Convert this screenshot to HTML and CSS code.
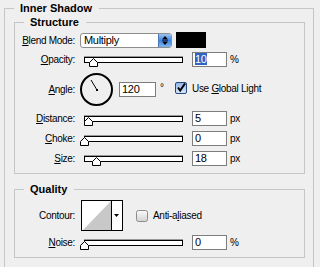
FILE: index.html
```html
<!DOCTYPE html>
<html lang="en">
<head>
  <meta charset="UTF-8" />
  <title>Inner Shadow</title>
  <link rel="stylesheet" href="styles.css">
</head>
<body>
  <fieldset class="panel">
    <legend>Inner Shadow</legend>

    <!-- Structure -->
    <fieldset class="group structure">
      <legend>Structure</legend>

      <div class="row row-blend">
        <label class="lbl"><u>B</u>lend Mode:</label>
        <div class="select">
          <span class="select-text">Multiply</span>
          <span class="stepper">
            <svg width="12" height="15" viewBox="0 0 12 15">
              <polygon points="6,3 9,6.5 3,6.5" fill="#000"/>
              <line x1="3" y1="7.5" x2="9" y2="7.5" stroke="#1c3f7a" stroke-width="1"/>
              <polygon points="3,8.5 9,8.5 6,12" fill="#000"/>
            </svg>
          </span>
        </div>
        <span class="swatch"></span>
      </div>

      <div class="row">
        <label class="lbl"><u>O</u>pacity:</label>
        <div class="slider">
          <div class="track"></div>
          <svg class="thumb" style="left:9px" width="9" height="9" viewBox="0 0 9 9"><polygon points="0.5,4.5 4.5,0.5 8.5,4.5 8.5,8.5 0.5,8.5" fill="#fff" stroke="#000"/></svg>
        </div>
        <div class="field"><span class="sel">10</span></div>
        <span class="unit">%</span>
      </div>

      <div class="row row-angle">
        <label class="lbl"><u>A</u>ngle:</label>
        <svg class="dial" width="34" height="33" viewBox="0 0 34 33">
          <circle cx="16.5" cy="16.5" r="15.5" fill="none" stroke="#000" stroke-width="2"/>
          <line x1="17" y1="17" x2="11" y2="7" stroke="#000" stroke-width="1"/>
          <rect x="16" y="16" width="2" height="2" fill="#000"/>
        </svg>
        <div class="angle-controls">
          <div class="field field-angle">120</div>
          <span class="deg">°</span>
          <span class="check checked">
            <svg width="12" height="12" viewBox="0 0 12 12">
              <defs>
                <linearGradient id="cb" x1="0" y1="0" x2="0" y2="1">
                  <stop offset="0" stop-color="#8fb6ea"/>
                  <stop offset="1" stop-color="#dbe8f8"/>
                </linearGradient>
              </defs>
              <rect x="0.5" y="0.5" width="11" height="11" rx="1.5" fill="url(#cb)" stroke="#27497f"/>
              <path d="M3 5.5 L5.2 8.5 L10 1.5" fill="none" stroke="#000" stroke-width="2"/>
            </svg>
          </span>
          <span class="check-text">Use <u>G</u>lobal Light</span>
        </div>
      </div>

      <div class="row row-gap">
        <label class="lbl"><u>D</u>istance:</label>
        <div class="slider">
          <div class="track"></div>
          <svg class="thumb" style="left:4px" width="9" height="9" viewBox="0 0 9 9"><polygon points="0.5,4.5 4.5,0.5 8.5,4.5 8.5,8.5 0.5,8.5" fill="#fff" stroke="#000"/></svg>
        </div>
        <div class="field">5</div>
        <span class="unit">px</span>
      </div>

      <div class="row">
        <label class="lbl"><u>C</u>hoke:</label>
        <div class="slider">
          <div class="track"></div>
          <svg class="thumb" style="left:0px" width="9" height="9" viewBox="0 0 9 9"><polygon points="0.5,4.5 4.5,0.5 8.5,4.5 8.5,8.5 0.5,8.5" fill="#fff" stroke="#000"/></svg>
        </div>
        <div class="field">0</div>
        <span class="unit">px</span>
      </div>

      <div class="row">
        <label class="lbl"><u>S</u>ize:</label>
        <div class="slider">
          <div class="track"></div>
          <svg class="thumb" style="left:12px" width="9" height="9" viewBox="0 0 9 9"><polygon points="0.5,4.5 4.5,0.5 8.5,4.5 8.5,8.5 0.5,8.5" fill="#fff" stroke="#000"/></svg>
        </div>
        <div class="field">18</div>
        <span class="unit">px</span>
      </div>
    </fieldset>

    <!-- Quality -->
    <fieldset class="group quality">
      <legend>Quality</legend>

      <div class="row row-contour">
        <label class="lbl">Contour:</label>
        <div class="contour">
          <svg class="curve" width="29" height="29" viewBox="0 0 29 29">
            <rect width="29" height="29" fill="#fff"/>
            <polygon points="1,29 29,29 29,0" fill="#c8c8c8"/>
          </svg>
          <span class="contour-arrow">
            <svg width="9" height="29" viewBox="0 0 9 29"><polygon points="2,13 7,13 4.5,16" fill="#000"/></svg>
          </span>
        </div>
        <span class="check">
          <svg width="12" height="12" viewBox="0 0 12 12">
            <defs>
              <linearGradient id="cu" x1="0" y1="0" x2="0" y2="1">
                <stop offset="0" stop-color="#fbfbfb"/>
                <stop offset="1" stop-color="#d2d2d2"/>
              </linearGradient>
            </defs>
            <rect x="0.5" y="0.5" width="11" height="11" rx="2" fill="url(#cu)" stroke="#8c8c8c"/>
          </svg>
        </span>
        <span class="check-text">Anti-a<u>l</u>iased</span>
      </div>

      <div class="row row-noise">
        <label class="lbl"><u>N</u>oise:</label>
        <div class="slider">
          <div class="track"></div>
          <svg class="thumb" style="left:0px" width="9" height="9" viewBox="0 0 9 9"><polygon points="0.5,4.5 4.5,0.5 8.5,4.5 8.5,8.5 0.5,8.5" fill="#fff" stroke="#000"/></svg>
        </div>
        <div class="field">0</div>
        <span class="unit">%</span>
      </div>
    </fieldset>
  </fieldset>
</body>
</html>
```

FILE: styles.css
```css
body {
  margin: 0;
  background-color: #efefef;
  font-family: "Liberation Sans", Arial, sans-serif;
  font-size: 10px;
  letter-spacing: -0.3px;
  color: #000;
}
fieldset {
  margin: 0;
  padding: 0;
  border: 1px solid #c6c6c6;
  min-width: 0;
}
legend {
  font-family: "Liberation Sans", Arial, sans-serif;
  font-weight: bold;
  font-size: 11px;
  letter-spacing: 0;
  line-height: 15px;
  padding: 0 7px 0 6px;
}
u {
  text-decoration: underline;
  text-underline-offset: 1px;
}
.panel {
  margin: 1px 6px 0 4px;
  padding: 0 8px 20px 9px;
}
.panel > legend {
  margin-left: 0;
}
.group > legend {
  margin-left: 9px;
}
.structure {
  margin-top: -1px;
  padding: 2px 0 7px 0;
}
.quality {
  margin-top: 8px;
  padding: 3px 0 7px 0;
}
.row {
  display: flex;
  align-items: center;
  height: 15px;
  margin-top: 5px;
}
.row-blend {
  height: 16px;
  margin-top: 0;
}
.row-blend + .row {
  margin-top: 4px;
}
.row-angle {
  height: 33px;
  margin-top: 6px;
  align-items: flex-start;
}
.row-contour {
  height: 31px;
  margin-top: 0;
}
.row-noise {
  margin-top: 4px;
}
.lbl {
  width: 60px;
  margin-right: 5px;
  text-align: right;
  white-space: nowrap;
  flex: none;
}
.row-angle .lbl {
  align-self: center;
}

/* blend mode popup */
.select {
  display: flex;
  width: 92px;
  height: 15px;
  box-sizing: border-box;
  border: 1px solid #8d8d8d;
  border-radius: 3px;
  background: #fff;
  overflow: hidden;
}
.select-text {
  flex: 1;
  padding-left: 3px;
  line-height: 13px;
  font-size: 11px;
}
.stepper {
  width: 12px;
  background: linear-gradient(#9cc4f2, #3f86e0 50%, #7fb4ef);
  border-left: 1px solid #4a78b8;
}
.stepper svg {
  display: block;
  margin-top: -1px;
}
.swatch {
  width: 30px;
  height: 16px;
  margin-left: 4px;
  background: #000;
}

/* sliders */
.slider {
  position: relative;
  width: 107px;
  height: 15px;
  flex: none;
}
.track {
  margin: 5px 4px 0 4px;
  height: 4px;
  background: #fff;
  border: 1px solid #000;
  box-shadow: 0 -1px 0 #9a9a9a;
}
.thumb {
  position: absolute;
  top: 6px;
  display: block;
}

/* number fields */
.field {
  width: 35px;
  height: 15px;
  box-sizing: border-box;
  margin-left: 5px;
  padding-left: 2px;
  border: 1px solid #7d7d7d;
  background: #fff;
  line-height: 13px;
  font-size: 11px;
  flex: none;
}
.sel {
  background: #2f64c4;
  color: #fff;
}
.unit {
  margin-left: 3px;
}

/* angle */
.dial {
  display: block;
  flex: none;
}
.angle-controls {
  display: flex;
  align-items: center;
  margin-top: 9px;
  height: 15px;
}
.field-angle {
  width: 37px;
  margin-left: 5px;
}
.deg {
  width: 15px;
  margin-left: 4px;
  align-self: flex-start;
  line-height: 11px;
}

/* checkboxes */
.check {
  width: 12px;
  height: 12px;
  flex: none;
}
.check svg {
  display: block;
}
.check-text {
  margin-left: 5px;
  white-space: nowrap;
}
.row-angle .check {
  margin-top: -3px;
}
.row-angle .check-text {
  margin-top: -3px;
}

/* contour */
.contour {
  display: flex;
  width: 42px;
  height: 31px;
  box-sizing: border-box;
  margin-left: 1px;
  border: 1px solid #000;
  background: #fff;
}
.curve {
  display: block;
  border-right: 1px solid #000;
}
.contour-arrow svg {
  display: block;
}
.row-contour .check {
  margin-left: 13px;
}
```
